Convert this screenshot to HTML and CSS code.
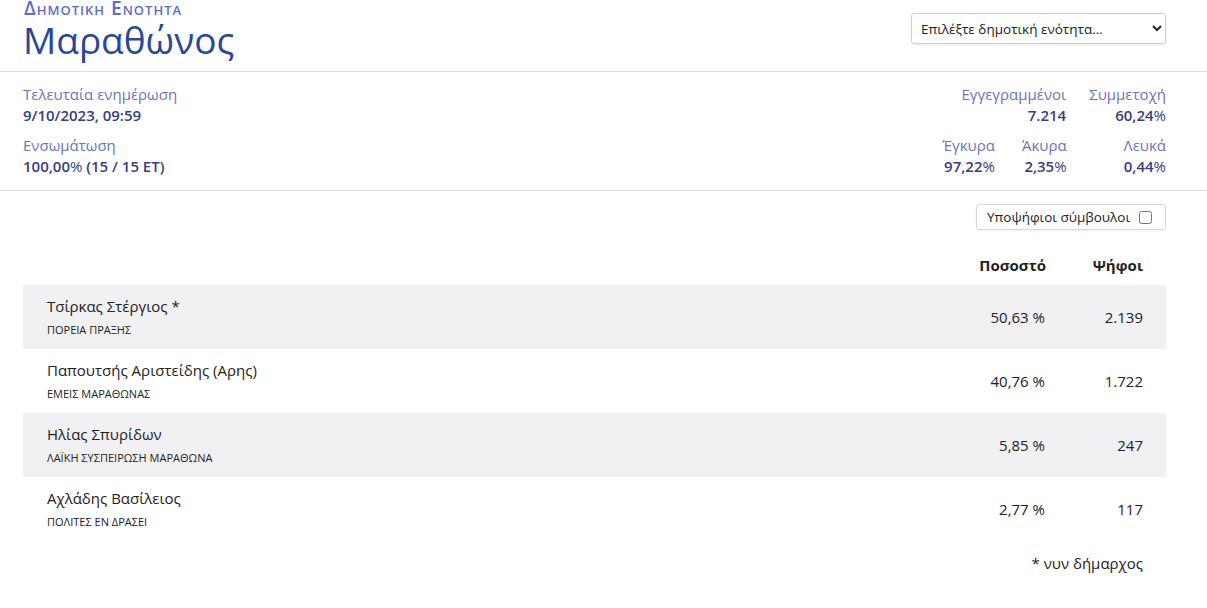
FILE: index.html
```html
<!DOCTYPE html>
<html lang="el">
<head>
<meta charset="utf-8">
<title>Μαραθώνος</title>
<link rel="stylesheet" href="styles.css">
</head>
<body>
<header class="head">
  <div class="wrap head-row">
    <div class="titles">
      <div class="kicker">Δημοτική Ενότητα</div>
      <h1 class="title">Μαραθώνος</h1>
    </div>
    <select class="picker">
      <option>Επιλέξτε δημοτική ενότητα...</option>
    </select>
  </div>
</header>
<section class="stats">
  <div class="wrap stats-grid">
    <div class="stat-left">
      <div class="lbl">Τελευταία ενημέρωση</div>
      <div class="val">9/10/2023, 09:59</div>
    </div>
    <div class="stat-right r1">
      <div class="cell"><div class="lbl">Εγγεγραμμένοι</div><div class="val">7.214</div></div>
      <div class="cell"><div class="lbl">Συμμετοχή</div><div class="val">60,24<span class="pc">%</span></div></div>
    </div>
    <div class="stat-left">
      <div class="lbl">Ενσωμάτωση</div>
      <div class="val">100,00<span class="pc">%</span> (15 / 15 ΕΤ)</div>
    </div>
    <div class="stat-right r2">
      <div class="cell"><div class="lbl">Έγκυρα</div><div class="val">97,22<span class="pc">%</span></div></div>
      <div class="cell"><div class="lbl">Άκυρα</div><div class="val">2,35<span class="pc">%</span></div></div>
      <div class="cell"><div class="lbl">Λευκά</div><div class="val">0,44<span class="pc">%</span></div></div>
    </div>
  </div>
</section>
<main class="wrap results">
  <div class="tools">
    <label class="toggle">Υποψήφιοι σύμβουλοι <input type="checkbox" class="chk"></label>
  </div>
  <table class="tbl">
    <thead>
      <tr><th class="c-name"></th><th class="c-pct">Ποσοστό</th><th class="c-votes">Ψήφοι</th></tr>
    </thead>
    <tbody>
      <tr class="odd"><td class="c-name"><div class="nm">Τσίρκας Στέργιος *</div><div class="party">ΠΟΡΕΙΑ ΠΡΑΞΗΣ</div></td><td class="c-pct">50,63 %</td><td class="c-votes">2.139</td></tr>
      <tr><td class="c-name"><div class="nm">Παπουτσής Αριστείδης (Αρης)</div><div class="party">ΕΜΕΙΣ ΜΑΡΑΘΩΝΑΣ</div></td><td class="c-pct">40,76 %</td><td class="c-votes">1.722</td></tr>
      <tr class="odd"><td class="c-name"><div class="nm">Ηλίας Σπυρίδων</div><div class="party">ΛΑΪΚΗ ΣΥΣΠΕΙΡΩΣΗ ΜΑΡΑΘΩΝΑ</div></td><td class="c-pct">5,85 %</td><td class="c-votes">247</td></tr>
      <tr><td class="c-name"><div class="nm">Αχλάδης Βασίλειος</div><div class="party">ΠΟΛΙΤΕΣ ΕΝ ΔΡΑΣΕΙ</div></td><td class="c-pct">2,77 %</td><td class="c-votes">117</td></tr>
    </tbody>
  </table>
  <div class="note">* νυν δήμαρχος</div>
</main>
</body>
</html>
```

FILE: styles.css
```css
* { box-sizing: border-box; }
html, body { margin: 0; padding: 0; background: #fff; }
body {
  font-family: "Open Sans", "Noto Sans", sans-serif;
  color: #222;
  font-size: 15px;
}
.wrap {
  margin-left: 23px;
  margin-right: 41px;
}
.head {
  border-bottom: 1px solid #dedede;
  height: 72px;
}
.head-row {
  display: flex;
  justify-content: space-between;
  align-items: flex-start;
}
.titles { padding-top: 0; }
.kicker {
  font-variant: small-caps;
  font-weight: 600;
  font-size: 19px;
  letter-spacing: 1px;
  color: #5e6bc6;
  line-height: 17px;
  padding-left: 1px;
}
.title {
  margin: 0;
  font-weight: 400;
  font-size: 37px;
  line-height: 46px;
  color: #2b4797;
}
.picker {
  margin-top: 13px;
  width: 255px;
  height: 31px;
  font-family: "Open Sans", sans-serif;
  font-size: 13.5px;
  color: #222;
  border: 1px solid #cfcfcf;
  border-radius: 3px;
  background: #fff;
  padding: 0 5px;
  box-shadow: 0 1px 2px rgba(0,0,0,0.08);
}
.stats {
  border-bottom: 1px solid #dedede;
  height: 119px;
  padding-top: 11px;
}
.stats-grid {
  display: grid;
  grid-template-columns: 1fr auto;
  row-gap: 9px;
}
.lbl {
  color: #6e73b8;
  line-height: 22px;
}
.val {
  color: #383e7c;
  font-weight: 600;
  line-height: 20px;
}
.pc { font-weight: 400; }
.stat-right {
  display: flex;
  justify-content: flex-end;
  text-align: right;
}
.r1 { gap: 23px; }
.r2 { gap: 27px; }
.r2 .cell:last-child { margin-left: 30px; }
.results { padding-top: 13px; }
.tools {
  display: flex;
  justify-content: flex-end;
}
.toggle {
  display: flex;
  align-items: center;
  gap: 9px;
  width: 190px;
  height: 26px;
  padding: 0 13px 0 10px;
  justify-content: flex-end;
  border: 1px solid #d8d8d8;
  border-radius: 3px;
  font-size: 13.5px;
  color: #222;
  box-shadow: 0 1px 2px rgba(0,0,0,0.06);
}
.chk {
  margin: 0;
  width: 13px;
  height: 13px;
}
.tbl {
  width: 100%;
  border-collapse: collapse;
  margin-top: 22px;
}
.tbl th {
  font-weight: 700;
  text-align: right;
  height: 33px;
  padding: 0 0 10px;
  vertical-align: bottom;
  font-size: 15px;
  color: #222;
}
.tbl td {
  height: 64px;
  vertical-align: middle;
}
.tbl .odd td { background: #f1f1f3; }
.c-name { text-align: left; padding-left: 24px !important; }
.c-pct { text-align: right; width: 120px; }
.c-votes { text-align: right; width: 120px; padding-right: 23px !important; }
.nm { font-size: 15px; line-height: 21px; color: #222; }
.party { font-size: 11px; line-height: 16px; margin-top: 5px; color: #222; text-transform: uppercase; }
.note {
  text-align: right;
  padding-right: 23px;
  margin-top: 12px;
  font-size: 15px;
}
```
